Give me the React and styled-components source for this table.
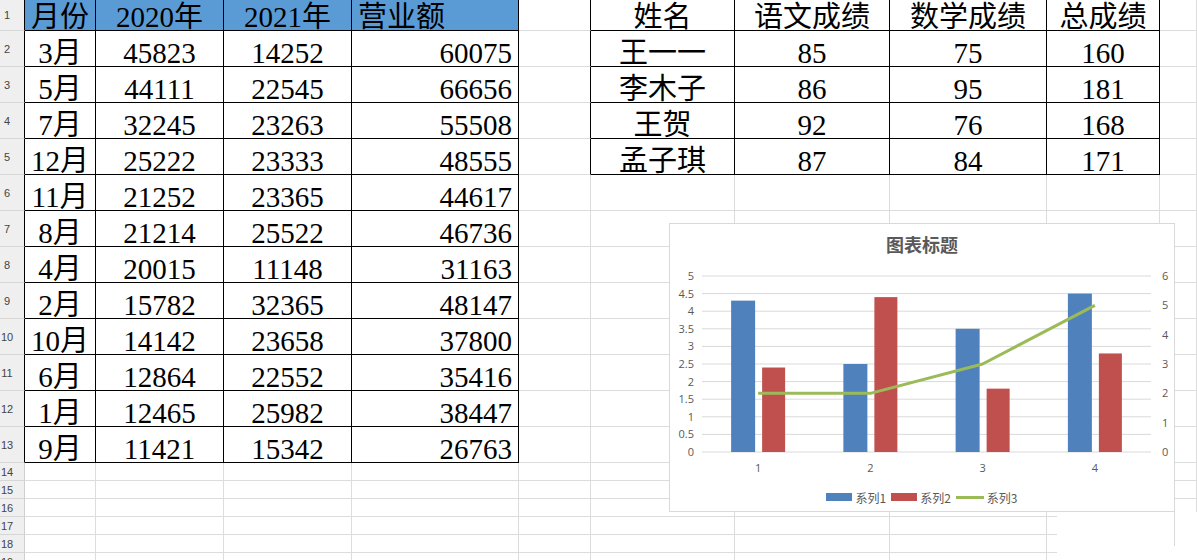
import React from "react"
import styled, { createGlobalStyle } from "styled-components"

const GlobalStyle = createGlobalStyle`
  html, body {
    margin: 0;
    padding: 0;
    background: #fff;
  }
  body {
    width: 1197px;
    height: 560px;
    overflow: hidden;
  }
`

const COLS = [25, 71, 128, 128, 167, 72, 144, 155, 157, 113, 37]
const ROWS = [31, ...Array(12).fill(36), ...Array(6).fill(18)]

const GRID = "#dcdcdc"
const INK = "#000"

const sales = [
  ["月份", "2020年", "2021年", "营业额"],
  ["3月", 45823, 14252, 60075],
  ["5月", 44111, 22545, 66656],
  ["7月", 32245, 23263, 55508],
  ["12月", 25222, 23333, 48555],
  ["11月", 21252, 23365, 44617],
  ["8月", 21214, 25522, 46736],
  ["4月", 20015, 11148, 31163],
  ["2月", 15782, 32365, 48147],
  ["10月", 14142, 23658, 37800],
  ["6月", 12864, 22552, 35416],
  ["1月", 12465, 25982, 38447],
  ["9月", 11421, 15342, 26763],
]

const scores = [
  ["姓名", "语文成绩", "数学成绩", "总成绩"],
  ["王一一", 85, 75, 160],
  ["李木子", 86, 95, 181],
  ["王贺", 92, 76, 168],
  ["孟子琪", 87, 84, 171],
]

const inSales = (r, c) => r >= 0 && r < sales.length && c >= 1 && c <= 4
const inScores = (r, c) => r >= 0 && r < scores.length && c >= 6 && c <= 9
const inTable = (r, c) => inSales(r, c) || inScores(r, c)

const Page = styled.div`
  position: relative;
  width: 1197px;
  height: 560px;
  overflow: hidden;
  background: #fff;
`

const Sheet = styled.div`
  display: grid;
  grid-template-columns: ${COLS.map((w) => w + "px").join(" ")};
  grid-template-rows: ${ROWS.map((h) => h + "px").join(" ")};
`

const RowHead = styled.div`
  box-sizing: border-box;
  background: #efefef;
  border-bottom: 1px solid #d6d6d6;
  border-right: 1px solid ${(p) => p.$rb};
  padding-right: 10px;
  display: flex;
  align-items: center;
  justify-content: center;
  font-family: "Liberation Sans", Arial, sans-serif;
  font-size: 11px;
  color: #444;
`

const Cell = styled.div`
  box-sizing: border-box;
  border-right: 1px solid ${(p) => p.$rb};
  border-bottom: 1px solid ${(p) => p.$bb};
  background: ${(p) => (p.$head ? "#5b9bd5" : "#fff")};
  display: flex;
  align-items: flex-end;
  justify-content: ${(p) => p.$align};
  padding: 0 6px;
  white-space: nowrap;
  font-family: "Liberation Serif", "Noto Sans CJK SC", serif;
  font-size: 29px;
  line-height: 26px;
  color: #000;
`

const ChartBox = styled.div`
  position: absolute;
  left: 669px;
  top: 223px;
  width: 506px;
  height: 289px;
  box-sizing: border-box;
  border: 1px solid #d9d9d9;
  background: #fff;
  display: flex;
  flex-direction: column;
  font-family: "Open Sans", "Noto Sans CJK SC", sans-serif;
  color: #595959;
`

/* blank patch below the chart's right side, as in the captured screen */
const Blank = styled.div`
  position: absolute;
  left: 1057px;
  top: 512px;
  width: 140px;
  height: 48px;
  background: #fff;
  &::after {
    content: "";
    position: absolute;
    left: 117px;
    top: 0;
    height: 34px;
    border-left: 1px solid #d9d9d9;
  }
`

const ChartTitle = styled.div`
  height: 40px;
  line-height: 40px;
  text-align: center;
  font-family: "Noto Sans CJK SC", sans-serif;
  font-size: 18px;
  font-weight: 700;
  color: #595959;
`

const Legend = styled.div`
  height: 22px;
  display: flex;
  align-items: center;
  justify-content: center;
  gap: 5px;
  font-family: "Noto Sans CJK SC", sans-serif;
  font-size: 12px;
  color: #595959;
`

const LegendItem = styled.div`
  display: flex;
  align-items: center;
  gap: 3px;
`

const Swatch = styled.span`
  display: inline-block;
  width: ${(p) => (p.$line ? 28 : 26)}px;
  height: ${(p) => (p.$line ? 3 : 8)}px;
  background: ${(p) => p.$color};
`

const BLUE = "#4f81bd"
const RED = "#c0504d"
const GREEN = "#9bbb59"

const s1 = [4.3, 2.5, 3.5, 4.5]
const s2 = [2.4, 4.4, 1.8, 2.8]
const s3 = [2, 2, 3, 5]

const PLOT_L = 32
const PLOT_R = 481
const ZERO = 188
const UNIT = 35.2
const RUNIT = (5 * UNIT) / 6
const CAT = (PLOT_R - PLOT_L) / 4

const Chart = () => {
  const cx = (i) => PLOT_L + CAT * (i + 0.5)
  const ticks = Array.from({ length: 11 }, (_, i) => i * 0.5)
  const rticks = [0, 1, 2, 3, 4, 5, 6]
  const linePts = s3.map((v, i) => `${cx(i)},${ZERO - v * RUNIT}`).join(" ")
  return (
    <ChartBox>
      <ChartTitle>图表标题</ChartTitle>
      <svg width="504" height="222" style={{ display: "block" }}>
        {ticks.map((t) => (
          <line
            key={t}
            x1={PLOT_L}
            x2={PLOT_R}
            y1={ZERO - t * UNIT}
            y2={ZERO - t * UNIT}
            stroke="#d9d9d9"
            strokeWidth="1"
          />
        ))}
        {ticks.map((t) => (
          <text
            key={"l" + t}
            x="24"
            y={ZERO - t * UNIT + 4}
            textAnchor="end"
            fontSize="11"
            fill="#595959"
          >
            {t}
          </text>
        ))}
        {rticks.map((t) => (
          <text key={"r" + t} x="492" y={ZERO - t * RUNIT + 4} fontSize="11" fill="#595959">
            {t}
          </text>
        ))}
        {s1.map((v, i) => (
          <rect key={"a" + i} x={cx(i) - 27} y={ZERO - v * UNIT} width="24" height={v * UNIT} fill={BLUE} />
        ))}
        {s2.map((v, i) => (
          <rect key={"b" + i} x={cx(i) + 4} y={ZERO - v * UNIT} width="23" height={v * UNIT} fill={RED} />
        ))}
        <polyline points={linePts} fill="none" stroke={GREEN} strokeWidth="3" strokeLinejoin="round" />
        {s1.map((_, i) => (
          <text key={"x" + i} x={cx(i)} y="208" textAnchor="middle" fontSize="11" fill="#595959">
            {i + 1}
          </text>
        ))}
      </svg>
      <Legend>
        <LegendItem>
          <Swatch $color={BLUE} />
          系列1
        </LegendItem>
        <LegendItem>
          <Swatch $color={RED} />
          系列2
        </LegendItem>
        <LegendItem>
          <Swatch $color={GREEN} $line />
          系列3
        </LegendItem>
      </Legend>
    </ChartBox>
  )
}

const cellValue = (r, c) => {
  if (inSales(r, c)) return sales[r][c - 1]
  if (inScores(r, c)) return scores[r][c - 6]
  return ""
}

const cellAlign = (r, c) => {
  if (inSales(r, c) && c === 4) return r === 0 ? "flex-start" : "flex-end"
  return "center"
}

export default function App() {
  const cells = []
  ROWS.forEach((_, r) => {
    COLS.forEach((_, c) => {
      if (c === 0) {
        cells.push(
          <RowHead key={r + "-" + c} $rb={inTable(r, 1) ? INK : "#cfcfcf"}>
            {r + 1}
          </RowHead>
        )
        return
      }
      cells.push(
        <Cell
          key={r + "-" + c}
          $rb={inTable(r, c) || inTable(r, c + 1) ? INK : GRID}
          $bb={inTable(r, c) || inTable(r + 1, c) ? INK : GRID}
          $head={inSales(r, c) && r === 0}
          $align={cellAlign(r, c)}
        >
          {cellValue(r, c)}
        </Cell>
      )
    })
  })
  return (
    <Page>
      <GlobalStyle />
      <Sheet>{cells}</Sheet>
      <Blank />
      <Chart />
    </Page>
  )
}
